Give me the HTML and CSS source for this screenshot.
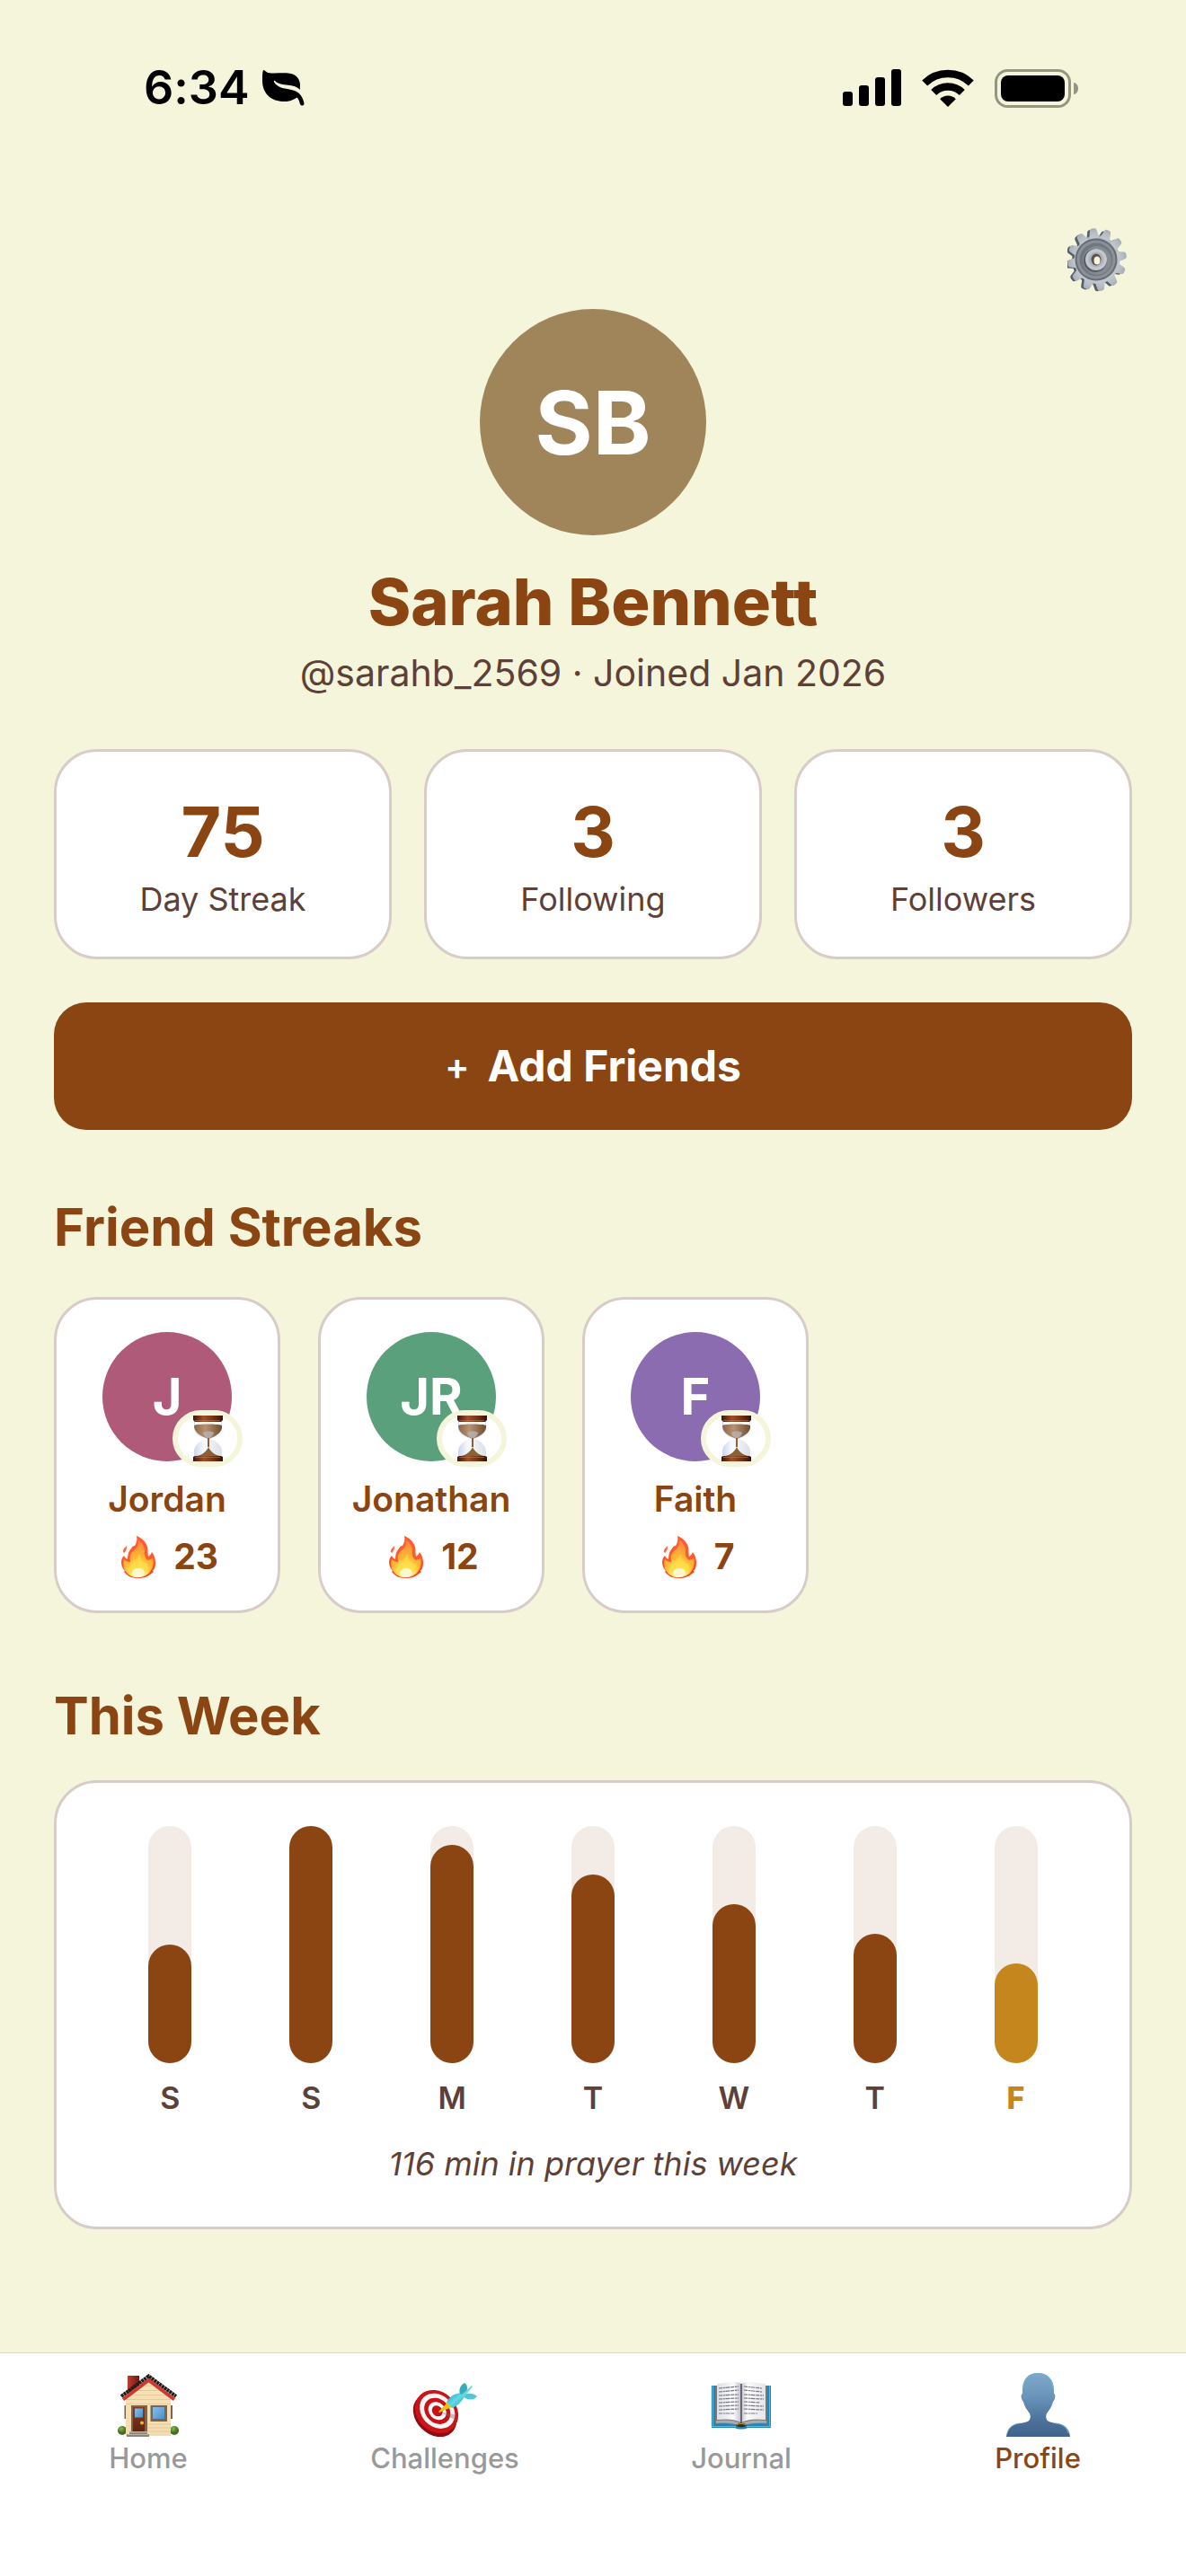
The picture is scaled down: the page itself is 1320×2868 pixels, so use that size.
FILE: index.html
```html
<!DOCTYPE html>
<html lang="en">
<head>
<meta charset="utf-8">
<meta name="viewport" content="width=device-width, initial-scale=1">
<title>Profile</title>
<link rel="stylesheet" href="styles.css">
</head>
<body>
<svg class="sprite" aria-hidden="true">
  <defs>
    <linearGradient id="flameRed" x1="0" y1="0" x2="0" y2="1">
      <stop offset="0" stop-color="#ff5a36"/><stop offset=".5" stop-color="#ff5a2c"/><stop offset="1" stop-color="#ff3a1e"/>
    </linearGradient>
    <radialGradient id="flameCore" cx=".5" cy=".92" r=".85">
      <stop offset="0" stop-color="#fffde0"/><stop offset=".25" stop-color="#fff06a"/><stop offset=".55" stop-color="#ffb833"/><stop offset="1" stop-color="#ff8b3d"/>
    </radialGradient>
    <linearGradient id="wood" x1="0" x2="1">
      <stop offset="0" stop-color="#3d1608"/><stop offset=".35" stop-color="#a04e28"/><stop offset=".65" stop-color="#7a3415"/><stop offset="1" stop-color="#351206"/>
    </linearGradient>
    <linearGradient id="sand" x1="0" x2="1">
      <stop offset="0" stop-color="#8b6546"/><stop offset=".4" stop-color="#b89272"/><stop offset="1" stop-color="#6f4c30"/>
    </linearGradient>
    <linearGradient id="glass" x1="0" x2="1">
      <stop offset="0" stop-color="#cbd6ee"/><stop offset=".35" stop-color="#f8fafd"/><stop offset="1" stop-color="#dcdfe6"/>
    </linearGradient>
    <symbol id="flame" viewBox="0 0 38 47">
      <path fill="url(#flameRed)" d="M17 0c5 2 10 6 12 12 1 4 0 8 1 11 2-1 3-3 4-5 3 4 4 8 4 12 0 4-1 7-3 9l1 1-4 3c-4 3-8 4-13 4S9 46 6 43l-3-3 1-1C1 36 0 32 0 29c0-3 1-5 3-7 1 2 2 3 4 4 0-5 1-9 4-12 1-2 2-3 4-3 2-3 3-7 2-11z"/>
      <path fill="#ff6a45" d="M6 11c0 3 0 5-3 8-1-1-2-2 0-5z"/>
      <path fill="url(#flameCore)" d="M19 5c5 3 7 8 7 12-1 5 1 8 4 10 3-1 4-2 5-3 2 8-1 15-5 18-7 6-17 5-22 1-5-4-7-10-5-17 2 2 4 3 7 3-1-6 0-10 4-13 4-3 5-6 5-11z"/>
      <path fill="#ffdb42" opacity=".75" d="M20 20c2 5 2 9 5 11 3-1 4 0 5 2 0 5-3 11-11 11S8 39 9 34c2 1 4 0 5-2 1-4 4-7 6-12z"/>
      <ellipse cx="19" cy="41" rx="7" ry="5" fill="#fffce0" opacity=".85"/>
    </symbol>
    <symbol id="hourglass" viewBox="0 0 35 51">
      <path fill="url(#glass)" d="M2 6h31v7c0 6-5 10-12 13 7 3 12 8 12 14v5H2v-5c0-6 5-11 12-14C7 23 2 19 2 13z"/>
      <path fill="#fff" d="M3 7h29v3H3z"/>
      <path fill="url(#sand)" d="M2 11c5-2 26-2 31 0 1 7-6 12-15 15C8 23 2 18 2 11z"/>
      <path fill="#b6b3b3" opacity=".8" d="M12 19c3-2 9-2 12 0-1 4-4 6-6 6s-5-2-6-6z"/>
      <path fill="#8d5f3e" d="M17 25h2v10h-2z"/>
      <path fill="#8a6035" d="M5 45c6-1 11-5 13-10 2 5 7 9 13 10z"/>
      <path fill="url(#wood)" d="M1 0h33v5l-2 2H3L1 5zM3 45h29l2 1v5H1v-5z"/>
      <path fill="#c78562" opacity=".5" d="M3 5h28v1H3zM3 46h28v1H3z"/>
    </symbol>
  </defs>
</svg>

<div class="screen">
  <div class="status">
    <div class="status-side">
      <span class="clock">6:34</span>
      <svg class="leaf" viewBox="0 0 47 40" aria-hidden="true">
        <path d="M1.500 0C3 0 4 3 8 3.300c7 .6 14-.5 21 .2 8 .8 12.500 5.500 13 12.500l-.2 6c-4-4-8-4.500-13-5.200-6-.8-11-1-14.500-4.600-1-.8-1.800 0-1.300 1 4 6.500 10 6.800 16 8 6 1.100 11 2.600 14 7.300 2 3 3 6 3.500 8.500.2 2-1 2.700-2.700 2.400-1.700-.4-1.800-1.400-2.400-3.400-.5-2-1.200-4-2.900-5.600C33 34 29 35 24 35 10 35 0 26 0 12 0 7 0 0 1.500 0z"/>
      </svg>
    </div>
    <div class="status-side status-icons">
      <svg width="65" height="42" viewBox="0 0 65 42" aria-hidden="true">
        <rect x="0" y="25" width="11" height="16" rx="3"/><rect x="18" y="18" width="11" height="23" rx="3"/><rect x="36" y="9" width="11" height="32" rx="3"/><rect x="54" y="0" width="11" height="41" rx="3"/>
      </svg>
      <svg width="58" height="42" viewBox="0 0 58 42" aria-hidden="true">
        <path d="M29 42l-8.800-8.800a12.600 12.600 0 0 1 17.600 0z"/>
        <path fill="none" stroke="#000" stroke-width="8.500" d="M13.200 26a22.500 22.500 0 0 1 31.600 0M3.200 15.500a37 37 0 0 1 51.600 0"/>
      </svg>
      <svg width="93" height="43" viewBox="0 0 93 43" aria-hidden="true">
        <rect x="1.500" y="1.500" width="82" height="40" rx="13" fill="none" stroke="#959583" stroke-width="3"/>
        <rect x="7" y="7" width="71" height="29" rx="8"/>
        <path fill="#959583" d="M88 15c3 0 5 3 5 6.500S91 28 88 28z"/>
      </svg>
    </div>
  </div>

  <main class="content">
    <div class="toolbar">
      <button class="settings" type="button" aria-label="Settings">
        <svg width="72" height="72" viewBox="0 0 72 72" aria-hidden="true">
          <defs>
            <linearGradient id="gearFace" x1="0" y1="0" x2="0" y2="1"><stop offset="0" stop-color="#a9adb4"/><stop offset=".5" stop-color="#b9bdc5"/><stop offset="1" stop-color="#c3c7d0"/></linearGradient>
            <g id="tooth"><path d="M-6-24L-4-33Q-3.500-35-1.500-35H1.500Q3.500-35 4-33L6-24z"/></g>
            <g id="teeth">
              <circle r="27"/>
              <use href="#tooth" transform="rotate(-8)"/><use href="#tooth" transform="rotate(22)"/><use href="#tooth" transform="rotate(52)"/><use href="#tooth" transform="rotate(82)"/><use href="#tooth" transform="rotate(112)"/><use href="#tooth" transform="rotate(142)"/><use href="#tooth" transform="rotate(172)"/><use href="#tooth" transform="rotate(202)"/><use href="#tooth" transform="rotate(232)"/><use href="#tooth" transform="rotate(262)"/><use href="#tooth" transform="rotate(292)"/><use href="#tooth" transform="rotate(322)"/>
            </g>
          </defs>
          <g transform="translate(32 36)">
            <use href="#teeth" transform="translate(-2 1) scale(.92 .98)" fill="#53606a"/>
            <use href="#teeth" transform="translate(1 0) scale(.94 1)" fill="url(#gearFace)"/>
            <circle r="23.500" fill="#666d74"/><circle r="21.500" fill="#8c9198"/><circle r="18.500" fill="#71777e"/><circle cx="1" cy="1" r="16" fill="#858b92"/>
            <circle cx="-1" cy="1" r="13" fill="#565d64"/><circle r="12" fill="#c2c6ce"/><circle r="8.500" fill="#aeb3bb"/>
            <ellipse rx="5.500" ry="6.500" fill="#5c5148"/><ellipse cx="1" cy="1" rx="3.500" ry="4.500" fill="#f5f5dc"/>
          </g>
        </svg>
      </button>
    </div>

    <header class="profile">
      <div class="avatar avatar-large">SB</div>
      <h1>Sarah Bennett</h1>
      <p class="handle">@sarahb_2569 · Joined Jan 2026</p>
    </header>

    <ul class="stats">
      <li class="card stat"><strong>75</strong><span>Day Streak</span></li>
      <li class="card stat"><strong>3</strong><span>Following</span></li>
      <li class="card stat"><strong>3</strong><span>Followers</span></li>
    </ul>

    <button class="add-friends" type="button"><span class="plus">+</span>Add Friends</button>

    <section>
      <h2>Friend Streaks</h2>
      <ul class="friends">
        <li class="card friend">
          <div class="avatar avatar-pink">J<span class="badge"><svg width="35" height="51" aria-hidden="true"><use href="#hourglass"/></svg></span></div>
          <span class="friend-name">Jordan</span>
          <span class="streak"><svg width="38" height="47" aria-hidden="true"><use href="#flame"/></svg>23</span>
        </li>
        <li class="card friend">
          <div class="avatar avatar-green">JR<span class="badge"><svg width="35" height="51" aria-hidden="true"><use href="#hourglass"/></svg></span></div>
          <span class="friend-name">Jonathan</span>
          <span class="streak"><svg width="38" height="47" aria-hidden="true"><use href="#flame"/></svg>12</span>
        </li>
        <li class="card friend">
          <div class="avatar avatar-purple">F<span class="badge"><svg width="35" height="51" aria-hidden="true"><use href="#hourglass"/></svg></span></div>
          <span class="friend-name">Faith</span>
          <span class="streak"><svg width="38" height="47" aria-hidden="true"><use href="#flame"/></svg>7</span>
        </li>
      </ul>
    </section>

    <section>
      <h2>This Week</h2>
      <div class="card week">
        <ul class="chart">
          <li><div class="track"><div class="fill" style="height:50%"></div></div>S</li>
          <li><div class="track"><div class="fill" style="height:100%"></div></div>S</li>
          <li><div class="track"><div class="fill" style="height:92%"></div></div>M</li>
          <li><div class="track"><div class="fill" style="height:79.500%"></div></div>T</li>
          <li><div class="track"><div class="fill" style="height:67%"></div></div>W</li>
          <li><div class="track"><div class="fill" style="height:54.500%"></div></div>T</li>
          <li class="today"><div class="track"><div class="fill" style="height:42%"></div></div>F</li>
        </ul>
        <p class="summary">116 min in prayer this week</p>
      </div>
    </section>
  </main>

  <nav class="tabs">
    <a href="#home">
      <svg width="72" height="72" viewBox="0 0 72 72" aria-hidden="true">
        <defs>
          <linearGradient id="wall" x1="0" y1="0" x2="0" y2="1"><stop offset="0" stop-color="#f7e3b8"/><stop offset="1" stop-color="#f3dcb0"/></linearGradient>
          <linearGradient id="door" x1="0" y1="0" x2="0" y2="1"><stop offset="0" stop-color="#8a3a20"/><stop offset="1" stop-color="#5b2413"/></linearGradient>
          <linearGradient id="pane" x1="0" y1="0" x2="1" y2="1"><stop offset="0" stop-color="#86c0ea"/><stop offset="1" stop-color="#4c8fcb"/></linearGradient>
          <linearGradient id="brick" x1="0" x2="1"><stop offset="0" stop-color="#c23a30"/><stop offset="1" stop-color="#6d1b14"/></linearGradient>
          <radialGradient id="bush" cx=".4" cy=".3"><stop offset="0" stop-color="#8bb84a"/><stop offset="1" stop-color="#3f6b1c"/></radialGradient>
        </defs>
        <circle cx="7" cy="65" r="5" fill="url(#bush)"/><circle cx="65" cy="65" r="5" fill="url(#bush)"/>
        <path fill="url(#brick)" d="M13 4h13v13L13 26z"/>
        <path fill="#7d6246" d="M9.500 37h2v15h-2zM61 37h2v15h-2z"/>
        <path fill="url(#wall)" d="M11 26L36 7l25 19v45H11z"/>
        <path stroke="#e0c797" stroke-width=".8" d="M28 15.500h17M22 20.500h29M15 25.500h42M11 30.500h50M11 35.500h50M34 58h27M34 62h27M34 66h27"/>
        <path fill="none" stroke="#1f1c1d" stroke-width="4" stroke-dasharray="3 .5" d="M6 27L36.500 4.500 67 27"/>
        <path fill="none" stroke="#cf3a30" stroke-width="4" d="M8 30.500L36.500 9 65 30.500"/>
        <path fill="#7e6549" d="M17 37h18v30H17z"/><path fill="url(#door)" d="M19 39h13v28H19z"/>
        <path fill="url(#pane)" d="M21 40.500h9v10h-9z"/><circle cx="29" cy="56.500" r="2" fill="#f2b13c"/>
        <path fill="#7e6549" d="M38.500 37H57v18H38.500z"/><path fill="url(#pane)" d="M41 39h13v13H41z"/>
        <path fill="#8b8479" d="M15 66h20v3h2v3H12v-3h3z"/><path fill="#b8b1a5" d="M15 66h20v1.500H15zM13 69h23v1H13z"/>
      </svg>
      <span>Home</span>
    </a>
    <a href="#challenges">
      <svg width="72" height="72" viewBox="0 0 72 72" aria-hidden="true">
        <defs>
          <linearGradient id="dart" x1="0" y1="0" x2="1" y2="1"><stop offset="0" stop-color="#2f9daa"/><stop offset=".5" stop-color="#5fdbe6"/><stop offset="1" stop-color="#2b96a4"/></linearGradient>
        </defs>
        <ellipse cx="25" cy="48" rx="27" ry="21" transform="rotate(45 25 48)" fill="#8e0d12"/>
        <g transform="rotate(45 27 44)">
          <ellipse cx="27" cy="44" rx="26" ry="22" fill="#c91419"/>
          <ellipse cx="27" cy="43" rx="21.500" ry="17.500" fill="#f8f5f5"/>
          <ellipse cx="27" cy="43" rx="16" ry="13" fill="#c71218"/>
          <ellipse cx="27" cy="43" rx="11" ry="9" fill="#fff"/>
          <ellipse cx="27" cy="43" rx="6.500" ry="5.500" fill="#c71218"/>
        </g>
        <path fill="#6d6d6d" opacity=".4" d="M34 45c5 0 9 2 13 2l1 7c-3-3-9-4-14-8z"/>
        <path fill="#eac319" d="M29 44l8-8 1-3 6 6-5 2-9 4z"/>
        <path fill="url(#dart)" d="M38 33c4-6 9-9 16-10l4 4c-3 6-7 10-14 13z"/>
        <path fill="#36adb8" d="M53 24c-2-5 1-10 5-12 4 2 4 9 0 14z"/>
        <path fill="#4fc8d3" d="M56 26c5-3 11-3 16 1-4 5-10 4-15 1z"/>
        <path fill="#61dae2" d="M54 26L66 15l1 1-10 12z"/>
      </svg>
      <span>Challenges</span>
    </a>
    <a href="#journal">
      <svg width="72" height="72" viewBox="0 0 72 72" aria-hidden="true">
        <defs>
          <linearGradient id="pageLeft" x1="0" x2="1"><stop offset="0" stop-color="#dfe0e6"/><stop offset=".7" stop-color="#fbfbfd"/><stop offset="1" stop-color="#bcbcc6"/></linearGradient>
          <linearGradient id="pageRight" x1="0" x2="1"><stop offset="0" stop-color="#c3c3cc"/><stop offset=".25" stop-color="#fbfbfd"/><stop offset="1" stop-color="#e4e4ea"/></linearGradient>
        </defs>
        <path fill="#2387b5" d="M3 15h66v47H43c-2 2-12 2-14 0H3z"/>
        <path fill="#57b6dc" d="M3 60h27v1H3zM42 60h27v1H42zM4 15h1v45H4zM67 15h1v45h-1z"/>
        <path fill="#77777a" d="M7 15h58v43c-10-2-20-1-29 1-9-2-19-3-29-1z"/>
        <path fill="#a9a9ac" d="M8 54c10-1 20-1 28 3 8-4 18-4 28-3v3c-11-1-20 0-28 3-8-3-17-4-28-3z"/>
        <path fill="url(#pageLeft)" d="M9 13c9-1 22-4 27 0v43c-8-4-17-4-27-3z"/>
        <path fill="url(#pageRight)" d="M63 13c-9-1-22-4-27 0v43c8-4 17-4 27-3z"/>
        <path fill="none" stroke="#77777f" stroke-width="1.200" stroke-dasharray="4 .8 2 .6 5 .9" d="M11 18l22-2M11 22l22-2M11 26l22-1M11 30l22-1M11 34l22-1M11 38l22-1M11 42l22-1M11 46l18 0M39 16l20 2M39 20l20 2M39 25l22 1M39 29l22 1M39 33l18 1M39 37l22 1M39 41l22 1M39 46l15 0"/>
        <path stroke="#4a4a50" stroke-width="1.500" d="M36 13v44"/>
        <path fill="#32290d" d="M30 59c3-3 9-3 12 0-2 3-10 3-12 0z"/><path fill="none" stroke="#c9a12a" d="M31 59c3-2 7-2 10 0"/>
      </svg>
      <span>Journal</span>
    </a>
    <a href="#profile" class="active" aria-current="page">
      <svg width="72" height="72" viewBox="0 0 72 72" aria-hidden="true">
        <defs><linearGradient id="bust" x1="0" y1="0" x2="0" y2="1"><stop offset="0" stop-color="#7fa9cb"/><stop offset=".35" stop-color="#6b96ba"/><stop offset=".75" stop-color="#4c719a"/><stop offset="1" stop-color="#41628a"/></linearGradient></defs>
        <path fill="url(#bust)" d="M36 1c11 0 18 7 18 19v4c2 0 2 6-1 9-1 5-4 9-7 13-1 2-1 5 0 7 2 3 6 3 11 4 9 1 14 6 15 15H1c1-9 6-14 15-15 5-1 9-1 11-4 1-2 1-5 0-7-3-4-6-8-7-13-3-3-3-9-1-9v-4C19 8 25 1 36 1z"/>
        <path fill="none" stroke="#6db4d3" stroke-width="1" d="M20 17C21 7 27 1.500 36 1.500S52 7 53 17M2 68c2-7 7-10 14-11M70 68c-2-7-7-10-14-11"/>
      </svg>
      <span>Profile</span>
    </a>
  </nav>
</div>
</body>
</html>
```
FILE: styles.css
```css
* {
  box-sizing: border-box;
}

body {
  margin: 0;
  background: #f5f5dc;
  color: #5d4037;
  font-family: Inter, "Liberation Sans", sans-serif;
  font-variant-ligatures: none;
}

h1, h2, p, ul {
  margin: 0;
  padding: 0;
}

ul {
  list-style: none;
}

svg {
  display: block;
  flex: none;
}

button {
  border: 0;
  padding: 0;
  font-family: inherit;
  cursor: pointer;
}

.sprite {
  position: absolute;
  width: 0;
  height: 0;
}

.screen {
  display: flex;
  flex-direction: column;
  min-height: 100vh;
}

/* Status bar */
.status {
  display: flex;
  justify-content: space-between;
  align-items: center;
  padding: 66px 120px 0 160px;
}

.status-side {
  display: flex;
  align-items: center;
  gap: 14px;
}

.status-icons {
  gap: 23px;
}

.clock {
  color: #000;
  font-size: 52px;
  font-weight: 600;
  line-height: 64px;
}

.leaf {
  width: 47px;
  height: 40px;
}

/* Page content */
.content {
  flex: 1;
  padding: 123px 60px 60px;
}

.toolbar {
  display: flex;
  justify-content: flex-end;
}

.settings {
  background: none;
}

.card {
  background: #fff;
  border: 3px solid #d7ccc8;
  border-radius: 48px;
}

.avatar {
  display: flex;
  align-items: center;
  justify-content: center;
  position: relative;
  width: 144px;
  height: 144px;
  border-radius: 50%;
  color: #fff;
  font-size: 56px;
  font-weight: 700;
}

.avatar-pink {
  background: #b05a7a;
}

.avatar-green {
  background: #5ba07c;
}

.avatar-purple {
  background: #8b6cb0;
}

.avatar-large {
  width: 252px;
  height: 252px;
  background: #a0855b;
  font-size: 98px;
}

.profile {
  display: flex;
  flex-direction: column;
  align-items: center;
  padding-top: 19px;
}

h1 {
  margin-top: 32px;
  color: #8b4513;
  font-size: 72px;
  font-weight: 800;
  line-height: 84px;
}

.handle {
  margin-top: 12px;
  font-size: 41px;
  line-height: 50px;
}

.stats {
  display: grid;
  grid-template-columns: repeat(3, 1fr);
  gap: 36px;
  margin-top: 60px;
}

.stat {
  display: flex;
  flex-direction: column;
  align-items: center;
  gap: 6px;
  padding: 42px 12px;
}

.stat strong {
  color: #8b4513;
  font-size: 77px;
  font-weight: 700;
  line-height: 94px;
}

.stat span {
  font-size: 36px;
  line-height: 44px;
}

.add-friends {
  display: flex;
  align-items: center;
  justify-content: center;
  gap: 20px;
  width: 100%;
  margin-top: 48px;
  padding: 42px;
  border-radius: 36px;
  background: #8b4513;
  color: #fff;
  font-size: 48px;
  font-weight: 700;
  line-height: 58px;
}

.plus {
  font-size: 41px;
  font-weight: 600;
}

section {
  padding-top: 72px;
}

h2 {
  margin-bottom: 36px;
  color: #8b4513;
  font-size: 58px;
  font-weight: 700;
  line-height: 72px;
}

/* Friend streaks */
.friends {
  display: flex;
  gap: 42px;
  padding: 6px 0;
}

.friend {
  display: flex;
  flex-direction: column;
  align-items: center;
  width: 252px;
  padding: 36px 12px;
}

.badge {
  display: flex;
  justify-content: center;
  position: absolute;
  right: -12px;
  bottom: -6px;
  width: 78px;
  border: 6px solid #f5f5dc;
  border-radius: 32px;
  background: #fff;
}

.friend-name {
  margin-top: 18px;
  color: #8b4513;
  font-size: 39px;
  font-weight: 600;
  line-height: 48px;
}

.streak {
  display: flex;
  align-items: center;
  gap: 20px;
  margin-top: 16px;
  padding-left: 6px;
  color: #8b4513;
  font-size: 39px;
  font-weight: 700;
  line-height: 48px;
}

/* Weekly chart */
.week {
  padding: 48px;
}

.chart {
  display: grid;
  grid-template-columns: repeat(7, 1fr);
  font-size: 34px;
  font-weight: 600;
  line-height: 42px;
  text-align: center;
}

.track {
  display: flex;
  align-items: flex-end;
  width: 48px;
  height: 264px;
  margin: 0 auto 18px;
  border-radius: 24px;
  background: #f3ebe6;
}

.fill {
  width: 100%;
  border-radius: 24px;
  background: #8b4513;
}

.today {
  color: #c6861e;
  font-weight: 800;
}

.today .fill {
  background: #c6861e;
}

.summary {
  margin-top: 30px;
  font-size: 36px;
  font-style: italic;
  line-height: 44px;
  text-align: center;
}

/* Tab bar */
.tabs {
  display: grid;
  grid-template-columns: repeat(4, 1fr);
  padding: 21px 0 113px;
  border-top: 1px solid #d8d8d8;
  background: #fff;
}

.tabs a {
  display: flex;
  flex-direction: column;
  align-items: center;
  gap: 6px;
  color: #999;
  font-size: 31px;
  font-weight: 500;
  line-height: 36px;
  text-decoration: none;
}

.tabs .active {
  color: #8b4513;
}
```
